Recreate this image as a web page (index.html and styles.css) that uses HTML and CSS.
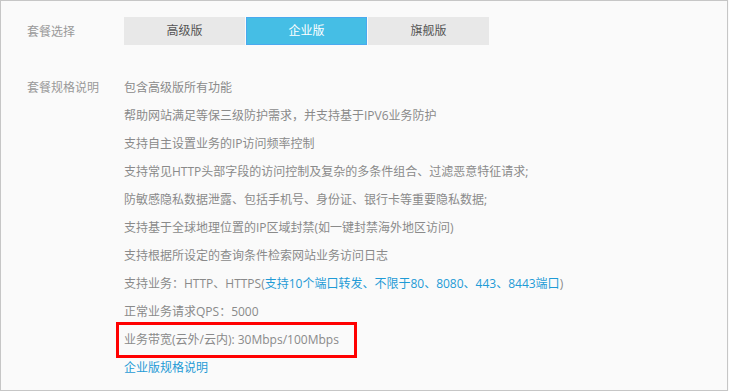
FILE: index.html
```html
<!DOCTYPE html>
<html lang="zh-CN">
<head>
<meta charset="UTF-8">
<meta name="viewport" content="width=device-width, initial-scale=1.0">
<title>套餐选择</title>
<link rel="stylesheet" href="styles.css">
</head>
<body>
<div class="panel">
    <div class="row row-plan">
        <div class="label">套餐选择</div>
        <div class="tabs">
            <div class="tab">高级版</div>
            <div class="tab active">企业版</div>
            <div class="tab">旗舰版</div>
        </div>
    </div>
    <div class="row row-spec">
        <div class="label">套餐规格说明</div>
        <ul class="spec">
            <li>包含高级版所有功能</li>
            <li>帮助网站满足等保三级防护需求，并支持基于IPV6业务防护</li>
            <li>支持自主设置业务的IP访问频率控制</li>
            <li>支持常见HTTP头部字段的访问控制及复杂的多条件组合、过滤恶意特征请求;</li>
            <li>防敏感隐私数据泄露、包括手机号、身份证、银行卡等重要隐私数据;</li>
            <li>支持基于全球地理位置的IP区域封禁(如一键封禁海外地区访问)</li>
            <li>支持根据所设定的查询条件检索网站业务访问日志</li>
            <li>支持业务：HTTP、HTTPS(<span class="blue">支持10个端口转发、不限于80、8080、443、8443端口</span>)</li>
            <li>正常业务请求QPS：5000</li>
            <li class="mark">业务带宽(云外/云内): 30Mbps/100Mbps</li>
            <li><a class="blue" href="#">企业版规格说明</a></li>
        </ul>
    </div>
</div>
</body>
</html>
```

FILE: styles.css
```css
html, body {
    margin: 0;
    padding: 0;
}
body {
    font-family: "Open Sans", "Noto Sans CJK SC", sans-serif;
    font-size: 12px;
    color: #8a8a8a;
    background: #fafafa;
}
.panel {
    box-sizing: border-box;
    width: 728px;
    height: 391px;
    border: 1px solid #c6c6c6;
    background: #fafafa;
    padding: 16px 0 0 26px;
}
.row {
    display: flex;
}
.label {
    width: 97px;
    flex: none;
    color: #999;
}
.row-plan {
    align-items: center;
}
.tabs {
    display: flex;
    gap: 1px;
}
.tab {
    box-sizing: border-box;
    width: 121px;
    height: 28px;
    line-height: 28px;
    text-align: center;
    background: #e8e8e8;
    color: #555;
}
.tab.active {
    background: #45bee5;
    border: 1px solid #4aa9ef;
    line-height: 26px;
    color: #fff;
}
.row-spec {
    margin-top: 29px;
    line-height: 28px;
}
.spec {
    list-style: none;
    margin: 0;
    padding: 0;
}
.blue {
    color: #1f9bd6;
    text-decoration: none;
}
.mark {
    width: fit-content;
    border: 3px solid #ff0000;
    line-height: 30px;
    padding: 0 15px 0 5px;
    margin: -4px 0 -4px -8px;
}
```
